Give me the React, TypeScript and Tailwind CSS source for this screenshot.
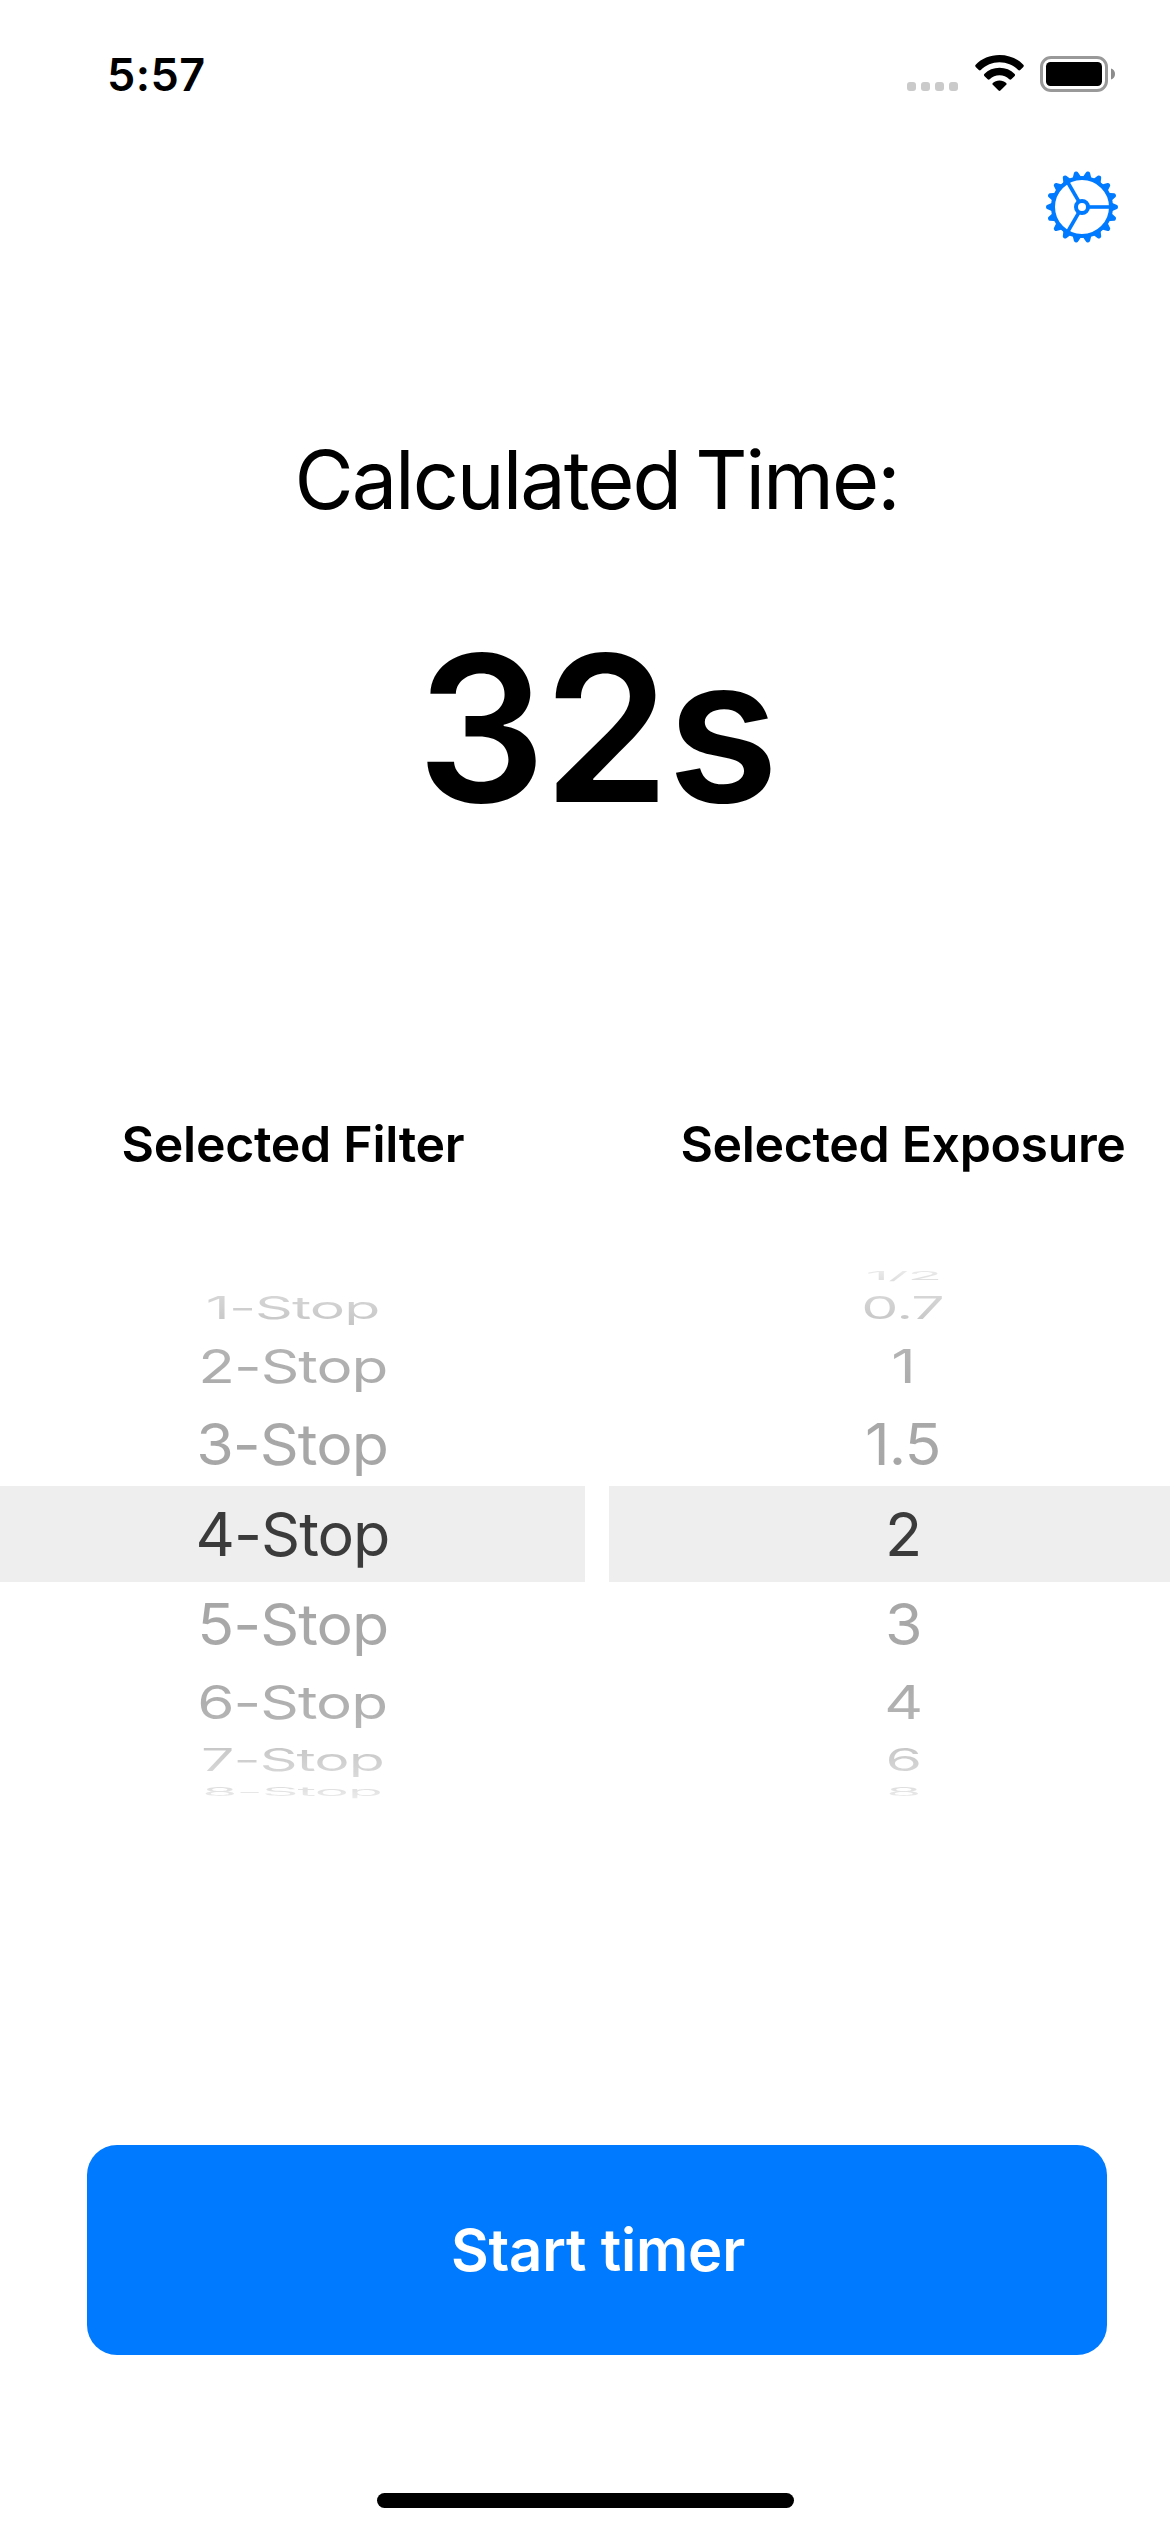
const FILTERS = ["", "1-Stop", "2-Stop", "3-Stop", "4-Stop", "5-Stop", "6-Stop", "7-Stop", "8-Stop"];
const EXPOSURES = ["1/2", "0.7", "1", "1.5", "2", "3", "4", "6", "8"];

// Rows of the drum from top to bottom: row height, foreshortening and fade.
const ROWS = [
  { row: "h-[20px]", text: "scale-x-[0.935] scale-y-[0.19] from-[#ececec] to-[#dcdcdc]" },
  { row: "h-[44px]", text: "scale-x-[0.968] scale-y-[0.505] from-[#dadada] to-[#c4c4c4]" },
  { row: "h-[72px]", text: "scale-x-[0.987] scale-y-[0.76] from-[#b6b6b6] to-[#aaaaaa]" },
  { row: "h-[84px]", text: "scale-x-[0.997] scale-y-[0.94] from-[#a9a9a9] to-[#a6a6a6]" },
  { row: "h-[96px] bg-[#eeeeee]", text: "from-[#3b3b3b] to-[#3b3b3b]" },
  { row: "h-[84px]", text: "scale-x-[0.997] scale-y-[0.94] from-[#a6a6a6] to-[#a9a9a9]" },
  { row: "h-[72px]", text: "scale-x-[0.987] scale-y-[0.76] from-[#aaaaaa] to-[#b6b6b6]" },
  { row: "h-[44px]", text: "scale-x-[0.968] scale-y-[0.505] from-[#c4c4c4] to-[#dadada]" },
  { row: "h-[20px]", text: "scale-x-[0.935] scale-y-[0.19] from-[#dcdcdc] to-[#ececec]" },
];

const TEETH = Array.from({ length: 18 }, (_, i) => i * 20);

function Gear() {
  return (
    <svg className="size-[72px]" viewBox="-36 -36 72 72" fill="none" stroke="#007aff">
      <circle r="29" strokeWidth="4" />
      <circle r="6" strokeWidth="4" />
      {[0, 120, 240].map((a) => (
        <path key={a} d="M7 0H28" strokeWidth="3.6" transform={`rotate(${a})`} />
      ))}
      {TEETH.map((a) => (
        <path
          key={a}
          d="M29.5 -4.4L31.5 -3.5L35 -2Q36 -1.6 36 0Q36 1.6 35 2L31.5 3.5L29.5 4.4Z"
          fill="#007aff"
          stroke="none"
          transform={`rotate(${a})`}
        />
      ))}
    </svg>
  );
}

function Wifi() {
  return (
    <svg className="h-[36px] w-[49px]" viewBox="0 0 49 36">
      <path d="M24.5 0C34 0 42.4 3.6 48.3 9.7Q49.3 10.8 48.3 11.9L45.2 15Q44.2 15.9 43.2 15C38.2 10.2 31.8 7.3 24.5 7.3S10.8 10.2 5.8 15Q4.8 15.9 3.8 15L.7 11.9Q-.3 10.8 .7 9.7C6.6 3.6 15 0 24.5 0Z" />
      <path d="M24.5 12.8C30.5 12.8 35.7 15 39.7 18.9Q40.6 19.9 39.7 20.9L36.3 24.2Q35.3 25.1 34.3 24.2C31.6 21.7 28.3 20.3 24.5 20.3S17.4 21.7 14.7 24.2Q13.7 25.1 12.7 24.2L9.3 20.9Q8.4 19.9 9.3 18.9C13.3 15 18.5 12.8 24.5 12.8Z" />
      <path d="M24.5 25.4C27.2 25.4 29.5 26.4 31.2 28Q32 28.9 31.2 29.8L25.4 35.5Q24.5 36.3 23.6 35.5L17.8 29.8Q17 28.9 17.8 28C19.5 26.4 21.8 25.4 24.5 25.4Z" />
    </svg>
  );
}

function Battery() {
  return (
    <svg className="h-[36px] w-[76px]" viewBox="0 0 76 36">
      <rect x="1.5" y="1.5" width="65" height="33" rx="9.5" fill="none" stroke="#999999" strokeWidth="3" />
      <rect x="6" y="6" width="56" height="24" rx="4.5" />
      <path d="M71 12.5C73.5 13.3 75 15.3 75 18S73.500 22.700 71 23.500Z" fill="#8c8c8c" />
    </svg>
  );
}

function Wheel({ items }: { items: string[] }) {
  return (
    <div className="flex flex-col">
      {items.map((item, i) => (
        <div key={i} className={`flex items-center justify-center ${ROWS[i].row}`}>
          <span
            className={`shrink-0 bg-linear-to-b bg-clip-text text-[61px] leading-[74px] tracking-[-1px] whitespace-nowrap text-transparent ${ROWS[i].text}`}
          >
            {item}
          </span>
        </div>
      ))}
    </div>
  );
}

export default function App() {
  return (
    <div className="h-[2532px] w-[1170px] overflow-hidden bg-white font-['Inter',sans-serif] text-black">
      <div className="flex h-[2532px] w-[1197px] flex-col">
        <header className="flex h-[150px] justify-between pt-[55px] pr-[81px] pl-[107px]">
          <span className="h-[40px] text-[45px] leading-[40px] font-semibold tracking-[0.4px]">5:57</span>
          <div className="flex h-[37px]">
            <div className="mt-[27px] mr-[17px] flex gap-[5px]">
              {[0, 1, 2, 3].map((i) => (
                <span key={i} className="size-[9px] rounded-[3px] bg-[#cacaca]" />
              ))}
            </div>
            <Wifi />
            <div className="mt-px ml-[16px]">
              <Battery />
            </div>
          </div>
        </header>

        <div className="flex h-[250px] justify-end pt-[21px] pr-[79px]">
          <button className="size-[72px]" aria-label="Settings">
            <Gear />
          </button>
        </div>

        <main className="flex flex-col">
          <h1 className="h-[160px] pr-[4px] text-center text-[81px] leading-[160px] tracking-[-2.05px] [word-spacing:-5.5px]">
            Calculated Time:
          </h1>
          <p className="h-[336px] pr-[4px] text-center text-[203px] leading-[336px] font-semibold tracking-[-2.5px]">
            32s
          </p>

          <div className="mt-[198px] grid grid-cols-[585px_588px] gap-x-[24px] text-center">
            <h2 className="h-[100px] pl-px text-[50px] leading-[100px] font-semibold tracking-[-0.3px] whitespace-nowrap">
              Selected Filter
            </h2>
            <h2 className="h-[100px] text-[50px] leading-[100px] font-semibold tracking-[-0.35px] whitespace-nowrap">
              Selected Exposure
            </h2>
          </div>
          <div className="mt-[72px] grid grid-cols-[585px_588px] gap-x-[24px]">
            <Wheel items={FILTERS} />
            <Wheel items={EXPOSURES} />
          </div>
        </main>

        <button className="mt-[343px] ml-[87px] h-[210px] w-[1020px] shrink-0 rounded-[30px] bg-[#007aff] pl-[2px] text-[58px] leading-[70px] font-semibold tracking-[-0.2px] text-white">
          Start timer
        </button>
        <div className="mt-[138px] ml-[377px] h-[15px] w-[417px] shrink-0 rounded-full bg-black" />
      </div>
    </div>
  );
}
